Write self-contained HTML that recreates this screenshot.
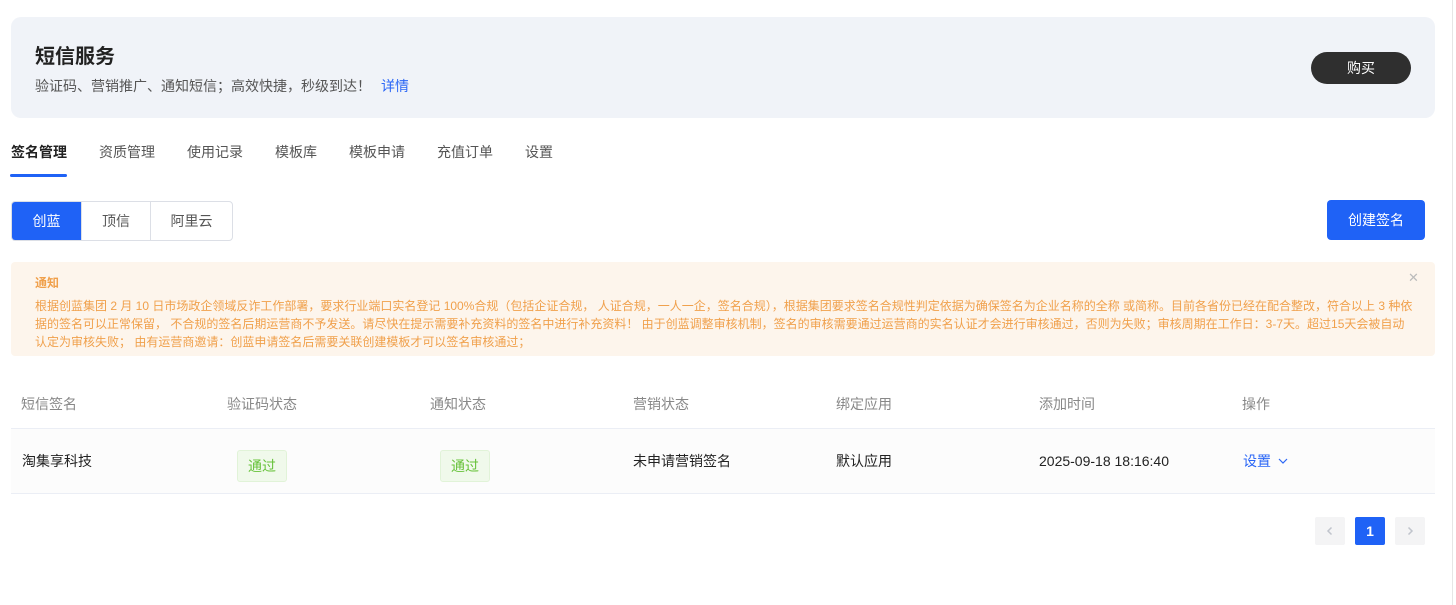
<!DOCTYPE html>
<html><head><meta charset="utf-8"><style>
*{margin:0;padding:0;box-sizing:border-box}
body{width:1456px;height:605px;background:#fff;font-family:"Liberation Sans","Noto Sans CJK SC",sans-serif;position:relative;overflow:hidden;color:#333}
.abs{position:absolute}
.banner{left:11px;top:17px;width:1424px;height:101px;background:#f0f3f8;border-radius:10px}
.title{left:35px;top:43px;font-size:20px;font-weight:bold;color:#222;line-height:28px}
.sub{left:35px;top:76px;font-size:14px;color:#555;line-height:20px}
.sub a{color:#2a66f6;text-decoration:none;margin-left:10px}
.buy{left:1311px;top:52px;width:100px;height:32px;background:#2f2f2f;color:#fff;border-radius:16px;font-size:14px;text-align:center;line-height:32px}
.tabs span{position:absolute;top:142px;font-size:14px;color:#555;line-height:20px}
.tabs .on{color:#222;font-weight:bold}
.ul{left:10px;top:174px;width:57px;height:3px;background:#1f62f6;border-radius:2px}
.seg{left:11px;top:201px;height:40px;display:flex;border:1px solid #dcdfe6;border-radius:4px;overflow:hidden}
.seg div{height:38px;line-height:38px;text-align:center;font-size:14px;color:#555;border-left:1px solid #dcdfe6}
.seg div.on{background:#1f62f6;color:#fff;border-left:none}
.create{left:1327px;top:200px;width:98px;height:40px;background:#1f62f6;color:#fff;border-radius:4px;font-size:14px;text-align:center;line-height:40px}
.notice{left:11px;top:262px;width:1424px;height:94px;background:#fdf5ec;border-radius:4px}
.nt{left:35px;top:274px;font-size:12px;font-weight:bold;color:#f0a04b;line-height:18px}
.nb{left:35px;top:297px;white-space:nowrap;font-size:12px;color:#f0a04b;line-height:18px}
.x{left:1408px;top:270px;font-size:13px;color:#bbb}
.th span{position:absolute;top:394px;font-size:14px;color:#888;line-height:20px}
.row{left:11px;top:428px;width:1424px;height:66px;background:#fcfcfc;border-top:1px solid #ebeef5;border-bottom:1px solid #ebeef5}
.td{position:absolute;top:451px;font-size:14px;color:#222;line-height:20px}
.tag{position:absolute;top:450px;width:50px;height:32px;background:#f0f9eb;border:1px solid #e1f3d8;border-radius:3px;color:#67c23a;font-size:14px;text-align:center;line-height:30px}
.pg{position:absolute;top:517px;width:30px;height:28px;border-radius:2px;background:#f4f4f5;color:#c0c4cc;font-size:14px;text-align:center;line-height:28px}
.vline{left:1452px;top:0;width:1px;height:605px;background:#e6e6e6}
</style></head><body>
<div class="abs banner"></div>
<div class="abs title">短信服务</div>
<div class="abs sub">验证码、营销推广、通知短信；高效快捷，秒级到达！<a>详情</a></div>
<div class="abs buy">购买</div>
<div class="tabs">
<span class="on" style="left:11px">签名管理</span>
<span style="left:99px">资质管理</span>
<span style="left:187px">使用记录</span>
<span style="left:275px">模板库</span>
<span style="left:349px">模板申请</span>
<span style="left:437px">充值订单</span>
<span style="left:525px">设置</span>
</div>
<div class="abs ul"></div>
<div class="abs seg"><div class="on" style="width:69px">创蓝</div><div style="width:69px">顶信</div><div style="width:82px">阿里云</div></div>
<div class="abs create">创建签名</div>
<div class="abs notice"></div>
<div class="abs nt">通知</div>
<div class="abs x">✕</div>
<div class="abs nb">根据创蓝集团 2 月 10 日市场政企领域反诈工作部署，要求行业端口实名登记 100%合规（包括企证合规， 人证合规，一人一企，签名合规），根据集团要求签名合规性判定依据为确保签名为企业名称的全称 或简称。目前各省份已经在配合整改，符合以上 3 种依<br>据的签名可以正常保留， 不合规的签名后期运营商不予发送。请尽快在提示需要补充资料的签名中进行补充资料！ 由于创蓝调整审核机制，签名的审核需要通过运营商的实名认证才会进行审核通过，否则为失败；审核周期在工作日：3-7天。超过15天会被自动<br>认定为审核失败； 由有运营商邀请：创蓝申请签名后需要关联创建模板才可以签名审核通过；</div>
<div class="th">
<span style="left:21px">短信签名</span>
<span style="left:227px">验证码状态</span>
<span style="left:430px">通知状态</span>
<span style="left:633px">营销状态</span>
<span style="left:836px">绑定应用</span>
<span style="left:1039px">添加时间</span>
<span style="left:1242px">操作</span>
</div>
<div class="abs row"></div>
<div class="td" style="left:22px">淘集享科技</div>
<div class="tag" style="left:237px">通过</div>
<div class="tag" style="left:440px">通过</div>
<div class="td" style="left:633px">未申请营销签名</div>
<div class="td" style="left:836px">默认应用</div>
<div class="td" style="left:1039px">2025-09-18 18:16:40</div>
<div class="td" style="left:1243px;color:#2a66f6">设置 <svg width="12" height="12" viewBox="0 0 12 12" style="margin-left:2px;vertical-align:-1px"><path d="M2 4l4 4 4-4" fill="none" stroke="#2a66f6" stroke-width="1.2"/></svg></div>
<div class="pg" style="left:1315px"><svg width="10" height="10" viewBox="0 0 10 10"><path d="M6.5 1.5L3 5l3.5 3.5" fill="none" stroke="#c0c4cc" stroke-width="1.5"/></svg></div>
<div class="pg" style="left:1355px;background:#1f62f6;color:#fff;font-weight:bold">1</div>
<div class="pg" style="left:1395px"><svg width="10" height="10" viewBox="0 0 10 10"><path d="M3.5 1.5L7 5 3.5 8.5" fill="none" stroke="#c0c4cc" stroke-width="1.5"/></svg></div>
<div class="abs vline"></div>
</body></html>
